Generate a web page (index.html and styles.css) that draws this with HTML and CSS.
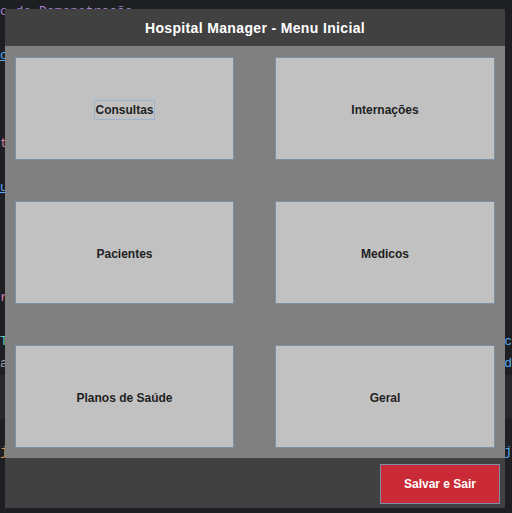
FILE: index.html
```html
<!DOCTYPE html>
<html lang="pt">
<head>
    <meta charset="UTF-8">
    <meta name="viewport" content="width=device-width, initial-scale=1.0">
    <title>Hospital Manager</title>
    <link rel="stylesheet" href="styles.css">
</head>
<body>
    <!-- editor behind the window -->
    <div class="editor">
        <div class="line"><span class="purple">o de Demonstração</span></div>
        <div class="line"></div>
        <div class="line"><span class="blue link">c</span></div>
        <div class="line"></div>
        <div class="line"></div>
        <div class="line"></div>
        <div class="line"><span class="pink">t</span></div>
        <div class="line"></div>
        <div class="line"><span class="blue link">u</span></div>
        <div class="line"></div>
        <div class="line"></div>
        <div class="line"></div>
        <div class="line"></div>
        <div class="line"><span class="pink">r</span></div>
        <div class="line"></div>
        <div class="line"><span class="cyan">T</span><span class="blue">c</span></div>
        <div class="line"><span class="grey">a</span><span class="blue">d</span></div>
        <div class="line band"></div>
        <div class="line band"></div>
        <div class="line"></div>
        <div class="line"><span class="orange">j</span><span class="blue">j</span></div>
    </div>

    <div class="window">
        <div class="title-bar">Hospital Manager - Menu Inicial</div>
        <div class="menu-grid">
            <button class="menu-btn"><span class="focus">Consultas</span></button>
            <button class="menu-btn">Internações</button>
            <button class="menu-btn">Pacientes</button>
            <button class="menu-btn">Medicos</button>
            <button class="menu-btn">Planos de Saúde</button>
            <button class="menu-btn">Geral</button>
        </div>
        <div class="footer">
            <button class="btn-exit">Salvar e Sair</button>
        </div>
    </div>
</body>
</html>
```

FILE: styles.css
```css
body {
    margin: 0;
    width: 512px;
    height: 513px;
    overflow: hidden;
    background-color: #1e1f22;
    position: relative;
    font-family: "Liberation Sans", Arial, sans-serif;
}

.editor {
    margin-top: 1px;
    font-family: "Liberation Mono", "DejaVu Sans Mono", monospace;
    font-size: 13px;
}

.line {
    height: 22px;
    line-height: 22px;
    display: flex;
    justify-content: space-between;
}

.line.band {
    background-color: #26282b;
}

.purple { color: #a57fd0; }
.blue { color: #56a8f5; }
.pink { color: #d77fb0; }
.cyan { color: #67c6c0; }
.grey { color: #9aa0a8; }
.orange { color: #d9924a; }

.link {
    text-decoration: underline;
}

.window {
    position: absolute;
    left: 5px;
    top: 9px;
    width: 500px;
    height: 499px;
    display: flex;
    flex-direction: column;
    background-color: #808080;
}

.title-bar {
    height: 37px;
    background-color: #414141;
    color: #fff;
    font-weight: bold;
    font-size: 14px;
    letter-spacing: 0.35px;
    display: flex;
    align-items: center;
    justify-content: center;
}

.menu-grid {
    flex: 1;
    display: grid;
    grid-template-columns: 219px 220px;
    grid-template-rows: repeat(3, 103px);
    column-gap: 41px;
    row-gap: 41px;
    padding: 11px 10px 10px;
}

.menu-btn {
    background-color: #c1c1c1;
    border: 1px solid #7d8fa0;
    color: #1f1f1f;
    font-family: "Liberation Sans", Arial, sans-serif;
    font-weight: bold;
    font-size: 12px;
    padding: 2px 0 0;
    margin: 0;
}

.focus {
    border: 1px solid #9db3c9;
    padding: 2px 0;
}

.footer {
    height: 50px;
    background-color: #414141;
    display: flex;
    justify-content: flex-end;
    align-items: flex-start;
    padding: 6px 5px 0 0;
    box-sizing: border-box;
}

.btn-exit {
    width: 120px;
    height: 40px;
    background-color: #c92a35;
    border: 1px solid #7d8fa0;
    color: #fff;
    font-family: "Liberation Sans", Arial, sans-serif;
    font-weight: bold;
    font-size: 12px;
    padding: 0;
}
```
